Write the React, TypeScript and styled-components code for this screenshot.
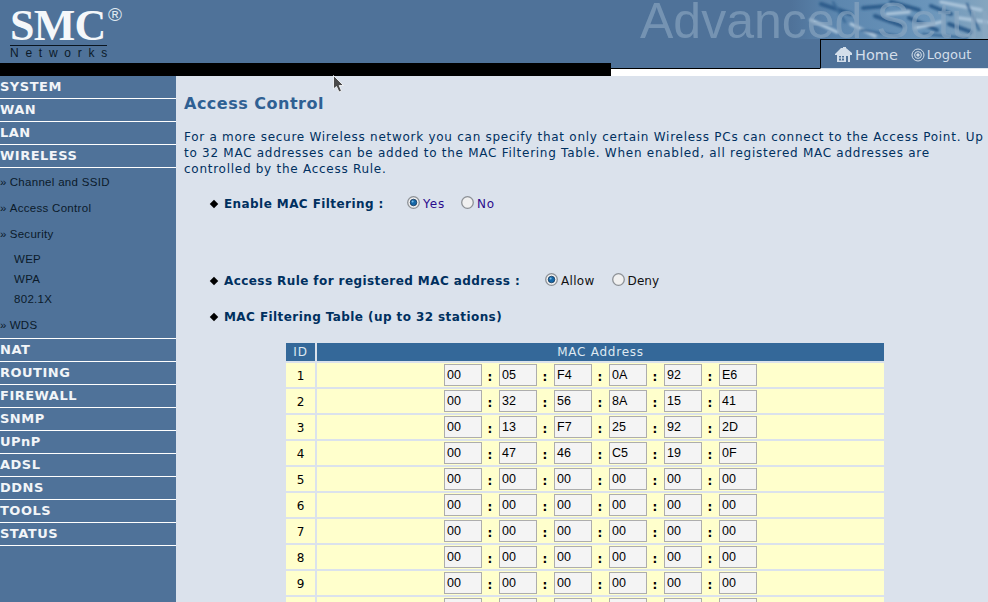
import React from "react";
import styled, { createGlobalStyle } from "styled-components";

const Global = createGlobalStyle`
  html, body { margin: 0; padding: 0; height: 602px; overflow: hidden; background: #dbe2ec; }
  #root { width: 988px; height: 602px; overflow: hidden; position: relative; }
  * { box-sizing: border-box; }
`;

const Page = styled.div`
  width: 988px; height: 602px; display: flex; flex-direction: column;
  font-family: "DejaVu Sans", Verdana, sans-serif; overflow: hidden; position: relative;
`;
const Header = styled.header`display: flex; height: 76px; flex: none; background: #fff;`;
const HeaderLeft = styled.div`width: 611px; flex: none; display: flex; flex-direction: column;`;
const LogoBand = styled.div`height: 63px; background: #4f7299; padding: 4px 0 0 10px; flex: none;`;
const BlackBar = styled.div`height: 13px; background: #000; flex: none;`;
const HeaderRight = styled.div`flex: 1; min-width: 0; display: flex; flex-direction: column; height: 69px; background: #4f7299;`;
const Title = styled.div`
  height: 39px; flex: none; padding-left: 29px; position: relative; overflow: hidden;
  font: 50px/43px "Liberation Sans", Arial, sans-serif; color: rgba(140, 168, 194, 0.62); white-space: nowrap;
  & > svg { position: absolute; left: 180px; top: 0; }
  & > span { position: relative; }
`;
const TabRow = styled.div`flex: 1; display: flex; min-height: 0;`;
const TabSpacer = styled.div`flex: 1; border-bottom: 1px solid #000;`;
const Tab = styled.nav`
  width: 168px; flex: none; border-top: 1px solid #000; border-left: 1px solid #000; border-bottom: 1px solid #dde5ee;
  display: flex; align-items: center; padding: 1px 0 0 14px; gap: 13px;
`;
const TabLink = styled.span<{ $size: number; $gap: number }>`
  display: flex; align-items: center; gap: ${p => p.$gap}px; font-size: ${p => p.$size}px; color: #d3deea;
`;

const Logo = styled.div`width: 112px; position: relative;`;
const LogoWord = styled.div`font: bold 44px/38px "Liberation Serif", serif; letter-spacing: -0.7px; color: #f4f7fa; height: 40px; padding-top: 3px;`;
const Reg = styled.span`position: absolute; left: 98px; top: 1px; font: 19px/19px "Liberation Sans", sans-serif; color: #dfe8f0;`;
const LogoRule = styled.div`height: 1px; background: #0a1520; width: 97px; margin: 1px 0 0;`;
const LogoSub = styled.div`font: 12px/13px "Liberation Sans", sans-serif; letter-spacing: 6.75px; color: #0c1a28; margin-top: 1px; white-space: nowrap;`;

const Body = styled.div`flex: 1; display: flex; min-height: 0;`;
const Side = styled.aside`width: 176px; flex: none; background: #4f7299; display: flex; flex-direction: column;`;
const MenuItem = styled.div`
  height: 23px; flex: none; border-bottom: 1px solid #fff; padding-top: 3px;
  font: bold 13px/16px "DejaVu Sans", sans-serif; letter-spacing: 0.5px; color: #f2f5f8;
`;
const Sub = styled.div`height: 171px; flex: none; border-bottom: 1px solid #fff; padding-top: 4px; display: flex; flex-direction: column;`;
const SubItem = styled.div<{ $h?: number; $indent?: boolean }>`
  height: ${p => p.$h ?? 26}px; flex: none; padding-left: ${p => (p.$indent ? 14 : 0)}px;
  font: 11.5px/20px "Liberation Sans", Arial, sans-serif; color: #0b1a2a; white-space: nowrap; letter-spacing: 0.3px;
  & > b { font-weight: normal; margin-right: 3px; }
`;

const Main = styled.main`flex: 1; background: #dbe2ec; padding: 16px 0 0 8px; min-width: 0; color: #00305f;`;
const H1 = styled.h1`margin: 0; font: bold 16px/24px "DejaVu Sans", sans-serif; color: #2f6093; letter-spacing: 0.5px;`;
const Intro = styled.p`margin: 13px 0 0; font-size: 12px; line-height: 16px; width: 804px; color: #00305f; letter-spacing: 0.73px;`;
const Opt = styled.div<{ $mt: number }>`
  margin: ${p => p.$mt}px 0 0 27px; display: flex; align-items: center; height: 20px; white-space: nowrap;
`;
const Diamond = styled.i`width: 6px; height: 6px; background: #000; transform: rotate(45deg); flex: none; margin: 0 7px 1px 0;`;
const OptLabel = styled.span<{ $w?: number }>`
  font-weight: bold; font-size: 12px; letter-spacing: 0.42px; color: #00305f; ${p => (p.$w ? `width: ${p.$w}px;` : "")} flex: none;
`;
const Radio = styled.label<{ $color: string; $gap: number; $sp: number }>`
  display: flex; align-items: center; font: 12px "DejaVu Sans", sans-serif; letter-spacing: ${p => p.$sp}px; color: ${p => p.$color}; margin-right: ${p => p.$gap}px;
`;
const Dot = styled.svg`width: 13px; height: 13px; margin: 0 3px 4px 0; flex: none;`;

const TableWrap = styled.div`margin: 16px 0 0 102px; width: 598px;`;
const Grid = styled.div`display: grid; grid-template-columns: 29px 1fr; column-gap: 2px; row-gap: 2px;`;
const Th = styled.div`height: 18px; background: #346899; color: #dfe8f1; font: 12px/18px "DejaVu Sans", sans-serif; text-align: center; letter-spacing: 0.75px;`;
const IdCell = styled.div`height: 24px; background: #ffffcc; color: #000; font: 12px/27px "DejaVu Sans", sans-serif; text-align: center;`;
const MacCell = styled.div`height: 24px; background: #ffffcc; display: flex; justify-content: center; align-items: center;`;
const Octet = styled.div`
  width: 38px; height: 22px; background: #f4f4f4; border: 1px solid #adadad; flex: none;
  font: 12.5px/21px "Liberation Sans", sans-serif; color: #000; padding-left: 2px;
`;
const Colon = styled.span`width: 16px; margin-right: 1px; text-align: center; font: bold 12px/22px "DejaVu Sans", sans-serif; color: #000; flex: none; padding-top: 3px;`;

const CursorMark = styled.svg`position: absolute; left: 332px; top: 74px; width: 14px; height: 20px;`;

const RadioIcon = ({ on }: { on?: boolean }) => (
  <Dot viewBox="0 0 13 13">
    <circle cx="6.5" cy="6.5" r="5.8" fill="#f0f0f0" stroke="#8d9196" strokeWidth="1.3" />
    {on && <circle cx="6.5" cy="6.5" r="3.3" fill="#1668a8" stroke="#0b2b4d" strokeWidth="0.7" />}
    {on && <circle cx="5.6" cy="5.6" r="1" fill="#7fc0ea" />}
  </Dot>
);

const rows: string[][] = [
  ["00","05","F4","0A","92","E6"],
  ["00","32","56","8A","15","41"],
  ["00","13","F7","25","92","2D"],
  ["00","47","46","C5","19","0F"],
  ["00","00","00","00","00","00"],
  ["00","00","00","00","00","00"],
  ["00","00","00","00","00","00"],
  ["00","00","00","00","00","00"],
  ["00","00","00","00","00","00"],
  ["00","00","00","00","00","00"],
];

export default function App() {
  return (
    <Page>
      <Global />
      <Header>
        <HeaderLeft>
          <LogoBand>
            <Logo>
              <LogoWord>SMC</LogoWord>
              <Reg>®</Reg>
              <LogoRule />
              <LogoSub>Networks</LogoSub>
            </Logo>
          </LogoBand>
          <BlackBar />
        </HeaderLeft>
        <HeaderRight>
          <Title>
            <svg width="197" height="39" viewBox="0 0 197 39">
              <defs>
                <linearGradient id="fade" x1="0" x2="1" y1="0" y2="0">
                  <stop offset="0" stopColor="#4f7299" />
                  <stop offset="0.22" stopColor="#5c86ae" />
                  <stop offset="0.7" stopColor="#6a95bb" />
                  <stop offset="1" stopColor="#86a6bf" />
                </linearGradient>
                <filter id="soft"><feGaussianBlur stdDeviation="1.3" /></filter>
              </defs>
              <rect width="197" height="39" fill="url(#fade)" />
              <g filter="url(#soft)" fill="none" strokeLinecap="round">
                <path d="M30 4 L60 14 M72 8 L95 6 M84 16 L112 26 M100 2 L128 10 M118 18 L146 30 M140 6 L160 14 M158 24 L180 32" stroke="#2f5d8c" strokeWidth="4" />
                <path d="M20 20 L46 32 M60 24 L84 36 M96 14 L118 12 M124 28 L150 22 M150 2 L190 10 M168 18 L196 22" stroke="#a9c3d9" strokeWidth="3.5" />
                <path d="M42 2 L54 22 M70 30 L108 36 M132 34 L176 38 M176 4 L188 30" stroke="#3d6c99" strokeWidth="2.5" />
              </g>
            </svg>
            <span>Advanced Setup</span>
          </Title>
          <TabRow>
            <TabSpacer />
            <Tab>
              <TabLink $size={14.5} $gap={3}>
                <svg width="17" height="15" viewBox="0 0 17 15">
                  <path d="M0 7 L6 1 H8 V0 H11 V1 L17 6 V8 H15 V15 H2 V8 H0 Z" fill="#d3deea" />
                  <path d="M4 9 H9 V13.5 H4 Z M11 9 H13 V15 H11 Z" fill="#4f7299" />
                  <path d="M6.5 9 V13.5 M4 11 H9" stroke="#d3deea" strokeWidth="1" />
                </svg>
                Home
              </TabLink>
              <TabLink $size={13} $gap={2}>
                <svg width="14" height="14" viewBox="0 0 14 14" fill="none" stroke="#d3deea">
                  <circle cx="7" cy="7" r="6" />
                  <circle cx="7" cy="7" r="3.4" />
                  <circle cx="7" cy="7" r="1.2" fill="#d3deea" />
                </svg>
                Logout
              </TabLink>
            </Tab>
          </TabRow>
        </HeaderRight>
      </Header>
      <Body>
        <Side>
          {["SYSTEM", "WAN", "LAN", "WIRELESS"].map(m => <MenuItem key={m}>{m}</MenuItem>)}
          <Sub>
            <SubItem><b>»</b>Channel and SSID</SubItem>
            <SubItem><b>»</b>Access Control</SubItem>
            <SubItem $h={25}><b>»</b>Security</SubItem>
            <SubItem $indent $h={20}>WEP</SubItem>
            <SubItem $indent $h={20}>WPA</SubItem>
            <SubItem $indent>802.1X</SubItem>
            <SubItem><b>»</b>WDS</SubItem>
          </Sub>
          {["NAT", "ROUTING", "FIREWALL", "SNMP", "UPnP", "ADSL", "DDNS", "TOOLS", "STATUS"].map(m => <MenuItem key={m}>{m}</MenuItem>)}
        </Side>
        <Main>
          <H1>Access Control</H1>
          <Intro>
            For a more secure Wireless network you can specify that only certain Wireless PCs can connect to the Access Point. Up to 32 MAC addresses can be added to the MAC Filtering Table. When enabled, all registered MAC addresses are controlled by the Access Rule.
          </Intro>
          <Opt $mt={17}>
            <Diamond />
            <OptLabel $w={183}>Enable MAC Filtering :</OptLabel>
            <Radio $color="#2a0a8c" $gap={16} $sp={0.9}><RadioIcon on />Yes</Radio>
            <Radio $color="#2a0a8c" $gap={0} $sp={0.6}><RadioIcon />No</Radio>
          </Opt>
          <Opt $mt={57}>
            <Diamond />
            <OptLabel $w={321}>Access Rule for registered MAC address :</OptLabel>
            <Radio $color="#111" $gap={17} $sp={0.3}><RadioIcon on />Allow</Radio>
            <Radio $color="#111" $gap={0} $sp={0.1}><RadioIcon />Deny</Radio>
          </Opt>
          <Opt $mt={16}>
            <Diamond />
            <OptLabel>MAC Filtering Table (up to 32 stations)</OptLabel>
          </Opt>
          <TableWrap>
            <Grid>
              <Th>ID</Th>
              <Th>MAC Address</Th>
              {rows.map((r, i) => (
                <React.Fragment key={i}>
                  <IdCell>{i + 1}</IdCell>
                  <MacCell>
                    {r.map((o, j) => (
                      <React.Fragment key={j}>
                        {j > 0 && <Colon>:</Colon>}
                        <Octet>{o}</Octet>
                      </React.Fragment>
                    ))}
                  </MacCell>
                </React.Fragment>
              ))}
            </Grid>
          </TableWrap>
        </Main>
      </Body>
      <CursorMark viewBox="0 0 14 20">
        <path d="M1.5 1.5 L1.5 15 L4.5 12.5 L7 18 L9.5 17 L7.2 11.5 L11.5 11.5 Z" fill="#4a4a4a" stroke="#f4f6f8" strokeWidth="0.9" />
      </CursorMark>
    </Page>
  );
}
